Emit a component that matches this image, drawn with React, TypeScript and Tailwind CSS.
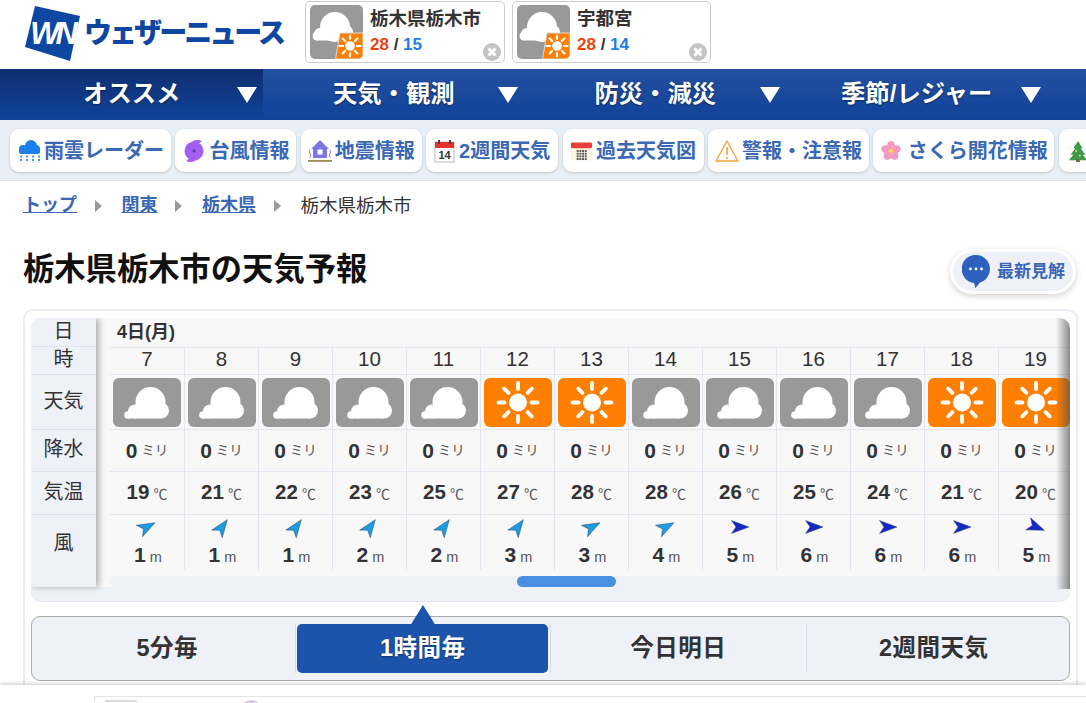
import React from "react";

const font = "font-['Liberation_Sans','Noto_Sans_CJK_JP',sans-serif]";

function Cloud({ className = "" }: { className?: string }) {
  return (
    <svg viewBox="0 0 68 49" className={className}>
      <rect width="68" height="49" rx="6" fill="#999999" />
      <g fill="#fff">
        <circle cx="37.500" cy="24" r="15" />
        <circle cx="48" cy="32.500" r="8" />
        <circle cx="22" cy="33.500" r="7" />
        <circle cx="15" cy="37" r="3.800" />
        <rect x="15" y="33" width="33" height="7.500" />
      </g>
    </svg>
  );
}

function SunRays({ cx, cy, r, a, b, w }: { cx: number; cy: number; r: number; a: number; b: number; w: number }) {
  return (
    <g>
      <circle cx={cx} cy={cy} r={r} fill="#fff" />
      {[0, 45, 90, 135, 180, 225, 270, 315].map((d) => {
        const t = (d * Math.PI) / 180;
        return (
          <line
            key={d}
            x1={cx + Math.cos(t) * a}
            y1={cy + Math.sin(t) * a}
            x2={cx + Math.cos(t) * b}
            y2={cy + Math.sin(t) * b}
            stroke="#fff"
            strokeWidth={w}
            strokeLinecap="round"
          />
        );
      })}
    </g>
  );
}

function Sun({ className = "" }: { className?: string }) {
  return (
    <svg viewBox="0 0 68 49" className={className}>
      <rect width="68" height="49" rx="6" fill="#ff7f00" />
      <SunRays cx={34} cy={24.5} r={9} a={13.5} b={19.5} w={3.8} />
    </svg>
  );
}

function MiniIcon() {
  return (
    <svg viewBox="0 0 53 54" className="w-[53px] h-[54px] shrink-0">
      <rect width="53" height="54" rx="5" fill="#999999" />
      <g fill="#fff">
        <circle cx="25" cy="22" r="15" />
        <circle cx="36" cy="27" r="7" />
        <circle cx="10" cy="29" r="6" />
        <circle cx="7" cy="31" r="4.500" />
        <rect x="7" y="28" width="34" height="7.500" />
      </g>
      <path d="M30 28 H53 V49 A5 5 0 0 1 48 54 H25.500 Z" fill="#ff7f00" stroke="#d8d8d8" strokeWidth="1" />
      <SunRays cx={40} cy={41} r={4.800} a={7} b={10.500} w={2.200} />
    </svg>
  );
}

function Pin({ name, hi, lo, w }: { name: string; hi: number; lo: number; w: string }) {
  return (
    <div className={"h-[62px] border border-[#cccccc] rounded-[5px] flex items-center pl-[4px] gap-[7px] relative bg-white " + w}>
      <MiniIcon />
      <div className="flex flex-col gap-[3px] -mt-[1px]">
        <div className="text-[18.500px] leading-[24px] font-bold text-[#333333] whitespace-nowrap">{name}</div>
        <div className="text-[17px] leading-[22px] font-bold text-[#333333]">
          <span className="text-[#e8450f]">{hi}</span> / <span className="text-[#1a7fe8]">{lo}</span>
        </div>
      </div>
      <svg viewBox="0 0 18 18" className="w-[18px] h-[18px] absolute right-[3px] bottom-[1px]">
        <circle cx="9" cy="9" r="9" fill="#c4c4c4" />
        <path d="M5.500 5.500 L12.500 12.500 M12.500 5.500 L5.500 12.500" stroke="#fff" strokeWidth="3" />
      </svg>
    </div>
  );
}

function NavItem({ label, active }: { label: string; active?: boolean }) {
  return (
    <div
      className={
        "h-full grid grid-cols-[1fr_auto_1fr] items-center pr-[6px] pl-[7px] " +
        (active ? "w-[262.500px] bg-gradient-to-b from-[#0e2f70] to-[#10439a]" : "w-[261.500px]")
      }
    >
      <span />
      <span className="text-[24.300px] font-bold text-white whitespace-nowrap [text-shadow:0_1px_2px_rgba(0,0,0,0.45)]">{label}</span>
      <svg viewBox="0 0 20 16" className="w-[20px] h-[16px] justify-self-end">
        <path d="M0 0 H20 L10 16 Z" fill="#fff" />
      </svg>
    </div>
  );
}

function RainIcon() {
  return (
    <svg viewBox="0 0 24 24" className="w-[24px] h-[24px] shrink-0">
      <g fill="#1a7fe8">
        <circle cx="14" cy="7" r="6" />
        <circle cx="19" cy="10" r="4" />
        <circle cx="6" cy="10" r="4" />
        <rect x="2" y="10" width="21" height="5" rx="2" />
      </g>
      <g stroke="#1a7fe8" strokeWidth="1.600" strokeDasharray="2 1.600">
        <path d="M4 16.500 V24 M10 16.500 V24 M16 16.500 V24 M22 16.500 V24" />
      </g>
    </svg>
  );
}
function TyphoonIcon() {
  return (
    <svg viewBox="0 0 24 24" className="w-[24px] h-[24px] shrink-0">
      <circle cx="12" cy="12" r="9.500" fill="#a45ff0" />
      <circle cx="12" cy="12" r="1.800" fill="#6d3fb5" />
      <path d="M20 2 Q15 0 10 2.500 L16 5 Z M4 22 Q9 24 14 21.500 L8 19 Z" fill="#a45ff0" />
    </svg>
  );
}
function QuakeIcon() {
  return (
    <svg viewBox="0 0 24 24" className="w-[24px] h-[24px] shrink-0">
      <path d="M12 1 L21 10 H19 V19 H5 V10 H3 Z" fill="#7c78e0" />
      <rect x="9.500" y="10.500" width="5" height="5" fill="#fff" />
      <path d="M2 11 q-1.500 2 0 3.500 t0 4 M22 11 q1.500 2 0 3.500 t0 4" stroke="#7c78e0" fill="none" strokeWidth="1" />
      <rect x="0" y="21" width="24" height="1.800" fill="#a08a5c" />
    </svg>
  );
}
function Cal14() {
  return (
    <svg viewBox="0 0 21 24" className="w-[21px] h-[24px] shrink-0">
      <rect x="1" y="3" width="19" height="20" fill="#fff" stroke="#bbbbbb" />
      <rect x="1" y="3" width="19" height="6" fill="#e8302e" />
      <rect x="4" y="1" width="2" height="4" fill="#444444" />
      <rect x="15" y="1" width="2" height="4" fill="#444444" />
      <text x="10.500" y="20" fontSize="11" fontWeight="700" textAnchor="middle" fill="#333333" fontFamily="Liberation Sans">14</text>
    </svg>
  );
}
function CalGrid() {
  const cells: React.ReactNode[] = [];
  for (let r = 0; r < 4; r++)
    for (let c = 0; c < 4; c++)
      cells.push(<rect key={r + "-" + c} x={7 + c * 2.8} y={11 + r * 2.8} width="2" height="2" fill="#555555" />);
  return (
    <svg viewBox="0 0 24 24" className="w-[23px] h-[24px] shrink-0">
      <rect x="1" y="3" width="22" height="19" fill="#fdf6e3" />
      <rect x="1" y="3" width="22" height="6" rx="1.500" fill="#e8403c" />
      {cells}
    </svg>
  );
}
function WarnIcon() {
  return (
    <svg viewBox="0 0 24 24" className="w-[24px] h-[24px] shrink-0">
      <path d="M12 2 L23 22 H1 Z" fill="#fff" stroke="#f2a33a" strokeWidth="1.300" strokeLinejoin="round" />
      <path d="M12 8 V16" stroke="#f2a33a" strokeWidth="1.600" />
      <circle cx="12" cy="19" r="1" fill="#f2a33a" />
    </svg>
  );
}
function Sakura() {
  return (
    <svg viewBox="0 0 24 24" className="w-[22px] h-[24px] shrink-0">
      {[0, 72, 144, 216, 288].map((d) => (
        <ellipse key={d} cx="12" cy="6.500" rx="4.500" ry="5.500" fill="#f29ac2" transform={`rotate(${d} 12 12)`} />
      ))}
      <circle cx="12" cy="12" r="2.500" fill="#f7d24a" />
    </svg>
  );
}
function Tree() {
  return (
    <svg viewBox="0 0 24 24" className="w-[22px] h-[26px] shrink-0">
      <path d="M12 1 L17 9 H15 L20 16 H17 L22 22 H2 L7 16 H4 L9 9 H7 Z" fill="#3f9a4a" />
      <rect x="10" y="21" width="4" height="3" fill="#8a5a2b" />
      <circle cx="10" cy="12" r="1" fill="#f7e27a" />
      <circle cx="14" cy="17" r="1" fill="#f7e27a" />
      <circle cx="3" cy="8" r="1.200" fill="#f3edb0" />
    </svg>
  );
}

function Chip({ w, icon, label, gap = "gap-[3px]" }: { w: number; icon: React.ReactNode; label: string; gap?: string }) {
  return (
    <div
      style={{ width: w }}
      className={"h-[43px] shrink-0 bg-white rounded-[9px] shadow-[0_1px_3px_rgba(0,0,0,0.18)] flex items-center justify-center whitespace-nowrap text-[20px] font-bold text-[#3a68b4] " + gap}
    >
      {icon}
      <span>{label}</span>
    </div>
  );
}

function Crumb({ children }: { children: React.ReactNode }) {
  return <a className="text-[18px] font-bold text-[#3a68b4] underline whitespace-nowrap">{children}</a>;
}
function CrumbArrow() {
  return (
    <svg viewBox="0 0 7 12" className="w-[7px] h-[12px] ml-[17.500px] mr-[20px] shrink-0">
      <path d="M0 0 L7 6 L0 12 Z" fill="#9a9a9a" />
    </svg>
  );
}

function Arrow({ deg, color }: { deg: number; color: string }) {
  return (
    <svg viewBox="0 0 20 20" className="w-[20px] h-[20px]" style={{ transform: `rotate(${deg}deg)` }}>
      <path d="M10 1 L16.500 18.500 L10 14 L3.500 18.500 Z" fill={color} stroke="#3d4a66" strokeWidth="0.500" strokeLinejoin="round" />
    </svg>
  );
}

const hours = [
  { h: 7, sun: false, t: 19, w: 1, deg: 62, c: "#1c9de0" },
  { h: 8, sun: false, t: 21, w: 1, deg: 36, c: "#1c9de0" },
  { h: 9, sun: false, t: 22, w: 1, deg: 36, c: "#1c9de0" },
  { h: 10, sun: false, t: 23, w: 2, deg: 36, c: "#1c9de0" },
  { h: 11, sun: false, t: 25, w: 2, deg: 36, c: "#1c9de0" },
  { h: 12, sun: true, t: 27, w: 3, deg: 36, c: "#1c9de0" },
  { h: 13, sun: true, t: 28, w: 3, deg: 62, c: "#1c9de0" },
  { h: 14, sun: false, t: 28, w: 4, deg: 62, c: "#1c9de0" },
  { h: 15, sun: false, t: 26, w: 5, deg: 90, c: "#1428c8" },
  { h: 16, sun: false, t: 25, w: 6, deg: 90, c: "#1428c8" },
  { h: 17, sun: false, t: 24, w: 6, deg: 90, c: "#1428c8" },
  { h: 18, sun: true, t: 21, w: 6, deg: 90, c: "#1428c8" },
  { h: 19, sun: true, t: 20, w: 5, deg: 112, c: "#1428c8" },
];

const line = "border-[#e3e6f0]";

function Label({ children, h }: { children: React.ReactNode; h: string }) {
  return (
    <div className={"flex items-center justify-center border-b border-[#dfe3ee] text-[20px] leading-none text-[#333333] pb-[3px] " + h}>
      {children}
    </div>
  );
}

function Tab({ label, active, last }: { label: string; active?: boolean; last?: boolean }) {
  return (
    <div className={"flex-1 h-[49px] flex items-center justify-center " + (last ? "" : "border-r border-[#d8dce6]")}>
      <div
        className={
          "w-[251px] h-full rounded-[5px] flex items-center justify-center text-[23.500px] font-bold tracking-[0.5px] pt-[1px] " +
          (active ? "bg-[#1c54ac] text-white [text-shadow:0_1px_2px_rgba(0,0,0,0.4)]" : "text-[#333333]")
        }
      >
        {label}
      </div>
    </div>
  );
}

export default function App() {
  return (
    <div className={"w-[1086px] h-[703px] overflow-hidden bg-white flex flex-col " + font}>
      <header className="h-[69px] shrink-0 flex items-start pt-[1px] pl-[25px] gap-[22px]">
        <div className="flex items-center w-[258px] h-[60px] gap-[4px]">
          <svg viewBox="0 0 55 56" className="w-[55px] h-[56px] shrink-0 mt-[5px]">
            <path d="M10 0 L55 10 L45 55 L0 41 Z" fill="#0d47a1" />
            <text x="27" y="38" fontSize="31" fontWeight="900" fontStyle="italic" textAnchor="middle" fill="#fff" fontFamily="Liberation Sans" letterSpacing="-4">WN</text>
          </svg>
          <span className="text-[28px] font-black text-[#0d47a1] whitespace-nowrap tracking-[-2.950px] leading-none mt-[5px]">ウェザーニュース</span>
        </div>
        <div className="flex gap-[7px]">
          <Pin name="栃木県栃木市" hi={28} lo={15} w="w-[200px]" />
          <Pin name="宇都宮" hi={28} lo={14} w="w-[199px]" />
        </div>
      </header>

      <nav className="h-[51px] shrink-0 flex bg-gradient-to-b from-[#234f9f] to-[#10439a]">
        <NavItem label="オススメ" active />
        <NavItem label="天気・観測" />
        <NavItem label="防災・減災" />
        <NavItem label="季節/レジャー" />
      </nav>

      <div className="h-[61px] shrink-0 bg-[#e9eff7] flex items-center pl-[10px] gap-[4.400px] overflow-hidden shadow-[inset_0_-1px_1px_rgba(0,0,0,0.06)]">
        <Chip w={161} icon={<RainIcon />} label="雨雲レーダー" />
        <Chip w={121} icon={<TyphoonIcon />} label="台風情報" />
        <Chip w={121} icon={<QuakeIcon />} label="地震情報" />
        <Chip w={132} icon={<Cal14 />} label="2週間天気" gap="gap-[4px]" />
        <Chip w={141} icon={<CalGrid />} label="過去天気図" gap="gap-[3px]" />
        <Chip w={161} icon={<WarnIcon />} label="警報・注意報" gap="gap-[3px]" />
        <Chip w={181} icon={<Sakura />} label="さくら開花情報" gap="gap-[6px]" />
        <div className="w-[60px] h-[43px] shrink-0 bg-white rounded-[9px] shadow-[0_1px_3px_rgba(0,0,0,0.18)] flex items-center pl-[8px]">
          <Tree />
        </div>
      </div>

      <div className="h-[48px] shrink-0 flex items-center pl-[23px] pt-[1px]">
        <Crumb>トップ</Crumb>
        <CrumbArrow />
        <Crumb>関東</Crumb>
        <CrumbArrow />
        <Crumb>栃木県</Crumb>
        <CrumbArrow />
        <span className="text-[18.500px] text-[#333333] whitespace-nowrap">栃木県栃木市</span>
      </div>

      <div className="h-[80px] shrink-0 flex items-center justify-between pl-[23px] pr-[10px]">
        <h1 className="text-[31.300px] font-bold text-[#111111] leading-none mt-[2px]">栃木県栃木市の天気予報</h1>
        <div className="w-[126px] h-[45px] rounded-full bg-[#eef1f8] border-[3px] border-white shadow-[0_2px_6px_rgba(0,0,0,0.18)] flex items-center pl-[9px] gap-[7px] mt-[4px]">
          <svg viewBox="0 0 28 34" className="w-[28px] h-[34px] shrink-0 mt-[2px]">
            <path d="M14 0 A14 14 0 0 1 18 27.400 L13.500 33 L12 27.900 A14 14 0 0 1 14 0 Z" fill="#2e60c0" />
            <circle cx="8.500" cy="14" r="1.400" fill="#fff" />
            <circle cx="14" cy="14" r="1.400" fill="#fff" />
            <circle cx="19.500" cy="14" r="1.400" fill="#fff" />
          </svg>
          <span className="text-[17px] font-bold text-[#3a68b4] whitespace-nowrap leading-none">最新見解</span>
        </div>
      </div>

      {/* page card */}
      <div className="ml-[23px] w-[1055px] h-[376px] border-[2px] border-b-0 border-[#e9ecf3] rounded-t-[10px] px-[6px] pt-[7px] shrink-0">
        <div className="relative h-[284px] rounded-[10px] bg-[#eef1f8] overflow-hidden border-b border-[#e3e6ef]">
          <div className="flex h-[269px] rounded-t-[10px]">
            <div className="w-[65px] shrink-0 bg-[#eef1f8] flex flex-col shadow-[3px_0_6px_rgba(0,0,0,0.3)] z-10 rounded-tl-[10px]">
              <Label h="h-[29px]">日</Label>
              <Label h="h-[28px]">時</Label>
              <Label h="h-[55px]">天気</Label>
              <Label h="h-[42px]">降水</Label>
              <Label h="h-[43px]">気温</Label>
              <div className="h-[55px] flex items-center justify-center text-[20px] text-[#333333]">風</div>
            </div>
            <div className="flex-1 bg-[#f8f8f9] min-w-0 flex flex-col">
              <div className="h-[29px] flex items-center pl-[21px] text-[18px] font-bold text-[#333333]">4日(月)</div>
              <div className="flex pl-[14px] overflow-hidden">
                {hours.map((x, i) => (
                  <div key={x.h} className={"w-[74px] shrink-0 flex flex-col " + (i ? "border-l " + line : "")}>
                    <div className={"h-[28px] flex items-center justify-center text-[20.500px] text-[#333333] border-t border-b pb-[3px] " + line}>{x.h}</div>
                    <div className={"h-[55px] flex items-center justify-center border-b " + line}>
                      {x.sun ? <Sun className="w-[68px] h-[49px]" /> : <Cloud className="w-[68px] h-[49px]" />}
                    </div>
                    <div className={"h-[42px] flex items-center justify-center gap-[4px] border-b " + line}>
                      <span className="text-[21px] font-bold text-[#333333]">0</span>
                      <span className="text-[13.500px] text-[#555555] mt-[2px]">ミリ</span>
                    </div>
                    <div className={"h-[43px] flex items-center justify-center gap-[4px] border-b pb-[2px] " + line}>
                      <span className="text-[20.500px] font-bold text-[#333333]">{x.t}</span>
                      <span className="text-[14px] text-[#555555] mt-[2px] font-['Noto_Sans_CJK_JP',sans-serif]">℃</span>
                    </div>
                    <div className="h-[55px] flex flex-col items-center pt-[2px]">
                      <Arrow deg={x.deg} color={x.c} />
                      <div className="flex items-baseline justify-center gap-[4px] leading-none mt-[7px] pl-[2px]">
                        <span className="text-[21px] font-bold text-[#333333]">{x.w}</span>
                        <span className="text-[14.500px] text-[#555555]">m</span>
                      </div>
                    </div>
                  </div>
                ))}
              </div>
              <div className="flex-1 bg-[#f8f8f9] pl-[14px] flex items-end">
                <div className="w-full h-[11px] bg-[#eef1f8] rounded-l-[5px] pl-[407px]">
                  <div className="w-[99px] h-[11px] rounded-full bg-[#4a90e2]" />
                </div>
              </div>
            </div>
          </div>
          <div className="absolute right-0 top-0 h-[271px] w-[14px] bg-gradient-to-r from-transparent to-[rgba(80,80,80,0.65)] rounded-tr-[10px]" />
        </div>

        <div className="mt-[14px] w-[1039px] h-[65px] relative rounded-[9px] border border-[#aaaaaa] bg-[#eef1f8] flex items-center px-[8px]">
          <svg viewBox="0 0 26 21" className="w-[26px] h-[21px] absolute left-[378px] -top-[12px]">
            <path d="M13 0 L26 21 H0 Z" fill="#1c54ac" />
          </svg>
          <Tab label="5分毎" />
          <Tab label="1時間毎" active />
          <Tab label="今日明日" />
          <Tab label="2週間天気" last />
        </div>
      </div>

      {/* page bottom edge, ad strip below */}
      <div className="h-[18px] shrink-0 bg-white shadow-[0_-2px_3px_rgba(0,0,0,0.15)] pt-[11px] pl-[94px] z-10">
        <div className="h-[7px] border-t border-l border-[#e4e4e4] flex pl-[10px] pt-[3px] gap-[103px]">
          <div className="w-[32px] h-[2px] bg-[#d6d9e4]" />
          <div className="w-[22px] h-[22px] rounded-full border-[3px] border-[#d9cfe0]" />
        </div>
      </div>
    </div>
  );
}
